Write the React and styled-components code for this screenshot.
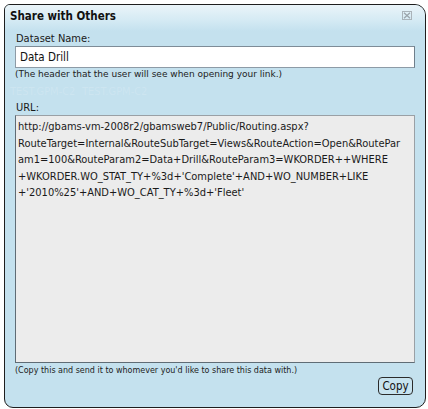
import React from "react";
import styled, { createGlobalStyle } from "styled-components";

const GlobalStyle = createGlobalStyle`
  html, body { margin: 0; padding: 0; background: #ffffff; }
  body { font-family: "DejaVu Sans Condensed", "DejaVu Sans", sans-serif; font-stretch: condensed; }
`;

const Dialog = styled.div`
  position: relative;
  box-sizing: border-box;
  margin: 4px 0 0 4px;
  width: 422px;
  height: 404px;
  border: 1px solid #1e1e1e;
  border-radius: 6px 11px 10px 9px;
  background: #c4e1ee;
  overflow: hidden;
  display: flex;
  flex-direction: column;
  color: #1a1a1a;
`;

const Mark = styled.span`
  position: absolute;
  left: ${(p) => p.$x}px;
  top: ${(p) => p.$y}px;
  font-size: 11px;
  line-height: 13px;
  color: rgba(255, 255, 255, 0.16);
  white-space: nowrap;
  pointer-events: none;
  z-index: 0;
`;

const TitleBar = styled.div`
  position: relative;
  z-index: 1;
  height: 26px;
  flex: none;
  display: flex;
  align-items: center;
  justify-content: space-between;
  padding: 0 13px 0 5px;
  background: linear-gradient(to bottom, #eaf4f9 0%, #d6ebf4 55%, #c4e1ee 100%);
`;

const Title = styled.span`
  font-size: 11.5px;
  font-weight: bold;
  color: #111;
  margin-top: -5px;
`;

const CloseButton = styled.span`
  display: flex;
  margin-top: -6px;
`;

const Body = styled.div`
  position: relative;
  z-index: 1;
  flex: 1;
  display: flex;
  flex-direction: column;
  padding: 1px 10px 0 10px;
`;

const Label = styled.div`
  font-size: 11px;
  line-height: 13px;
  color: #1a1a1a;
  padding-left: 1px;
  margin-top: ${(p) => p.$top || 0}px;
  margin-bottom: 1px;
`;

const TextInput = styled.div`
  box-sizing: border-box;
  width: 400px;
  height: 22px;
  background: #ffffff;
  border: 1px solid #8d9ba6;
  border-top-color: #7e8c97;
  border-right-color: #6f7f8b;
  display: flex;
  align-items: center;
  padding-left: 4px;
  font-size: 11.5px;
  color: #111;
`;

const Hint = styled.div`
  font-family: "DejaVu Sans", sans-serif;
  font-stretch: normal;
  font-size: ${(p) => p.$size}px;
  line-height: 11px;
  color: #222;
  margin-top: ${(p) => p.$top}px;
  white-space: nowrap;
`;

const UrlBox = styled.div`
  box-sizing: border-box;
  width: 400px;
  height: 248px;
  background: #ececec;
  border: 1px solid #9aa0a5;
  border-left-color: #5f6c75;
  border-bottom-color: #5f6c75;
  padding: 3px 2px;
  font-size: 11px;
  line-height: 16.6px;
  color: #1a1a1a;
  white-space: pre;
  overflow: hidden;
`;

const Footer = styled.div`
  display: flex;
  justify-content: flex-end;
  margin-top: 1px;
  padding-right: 2px;
`;

const CopyButton = styled.button`
  box-sizing: border-box;
  width: 35px;
  height: 18px;
  padding: 0;
  border: 1px solid #2b2b2b;
  border-radius: 4px;
  background: #c8e3ef;
  font-family: inherit;
  font-stretch: condensed;
  font-size: 11.5px;
  color: #111;
  line-height: 14px;
`;

const CloseIcon = () => (
  <svg width="10" height="9" viewBox="0 0 10 9">
    <rect x="0.5" y="0.5" width="9" height="8" fill="none" stroke="#aab3b9" />
    <path d="M2 1.8 L8 7.2 M8 1.8 L2 7.2" stroke="#9aa3a9" strokeWidth="1.2" />
  </svg>
);

const urlLines = [
  "http://gbams-vm-2008r2/gbamsweb7/Public/Routing.aspx?",
  "RouteTarget=Internal&RouteSubTarget=Views&RouteAction=Open&RoutePar",
  "am1=100&RouteParam2=Data+Drill&RouteParam3=WKORDER++WHERE",
  "+WKORDER.WO_STAT_TY+%3d+'Complete'+AND+WO_NUMBER+LIKE",
  "+'2010%25'+AND+WO_CAT_TY+%3d+'Fleet'",
];

const marks = [
  { x: 5, y: 80 },
  { x: 77, y: 80 },
];

export default function App() {
  return (
    <>
      <GlobalStyle />
      <Dialog>
        {marks.map((m, i) => (
          <Mark key={i} $x={m.x} $y={m.y}>
            TEST.GPM-C2
          </Mark>
        ))}
        <TitleBar>
          <Title>Share with Others</Title>
          <CloseButton>
            <CloseIcon />
          </CloseButton>
        </TitleBar>
        <Body>
          <Label>Dataset Name:</Label>
          <TextInput>Data Drill</TextInput>
          <Hint $size={9} $top={1}>(The header that the user will see when opening your link.)</Hint>
          <Label $top={21}>URL:</Label>
          <UrlBox>{urlLines.join("\n")}</UrlBox>
          <Hint $size={8} $top={2}>(Copy this and send it to whomever you'd like to share this data with.)</Hint>
          <Footer>
            <CopyButton>Copy</CopyButton>
          </Footer>
        </Body>
      </Dialog>
    </>
  );
}
